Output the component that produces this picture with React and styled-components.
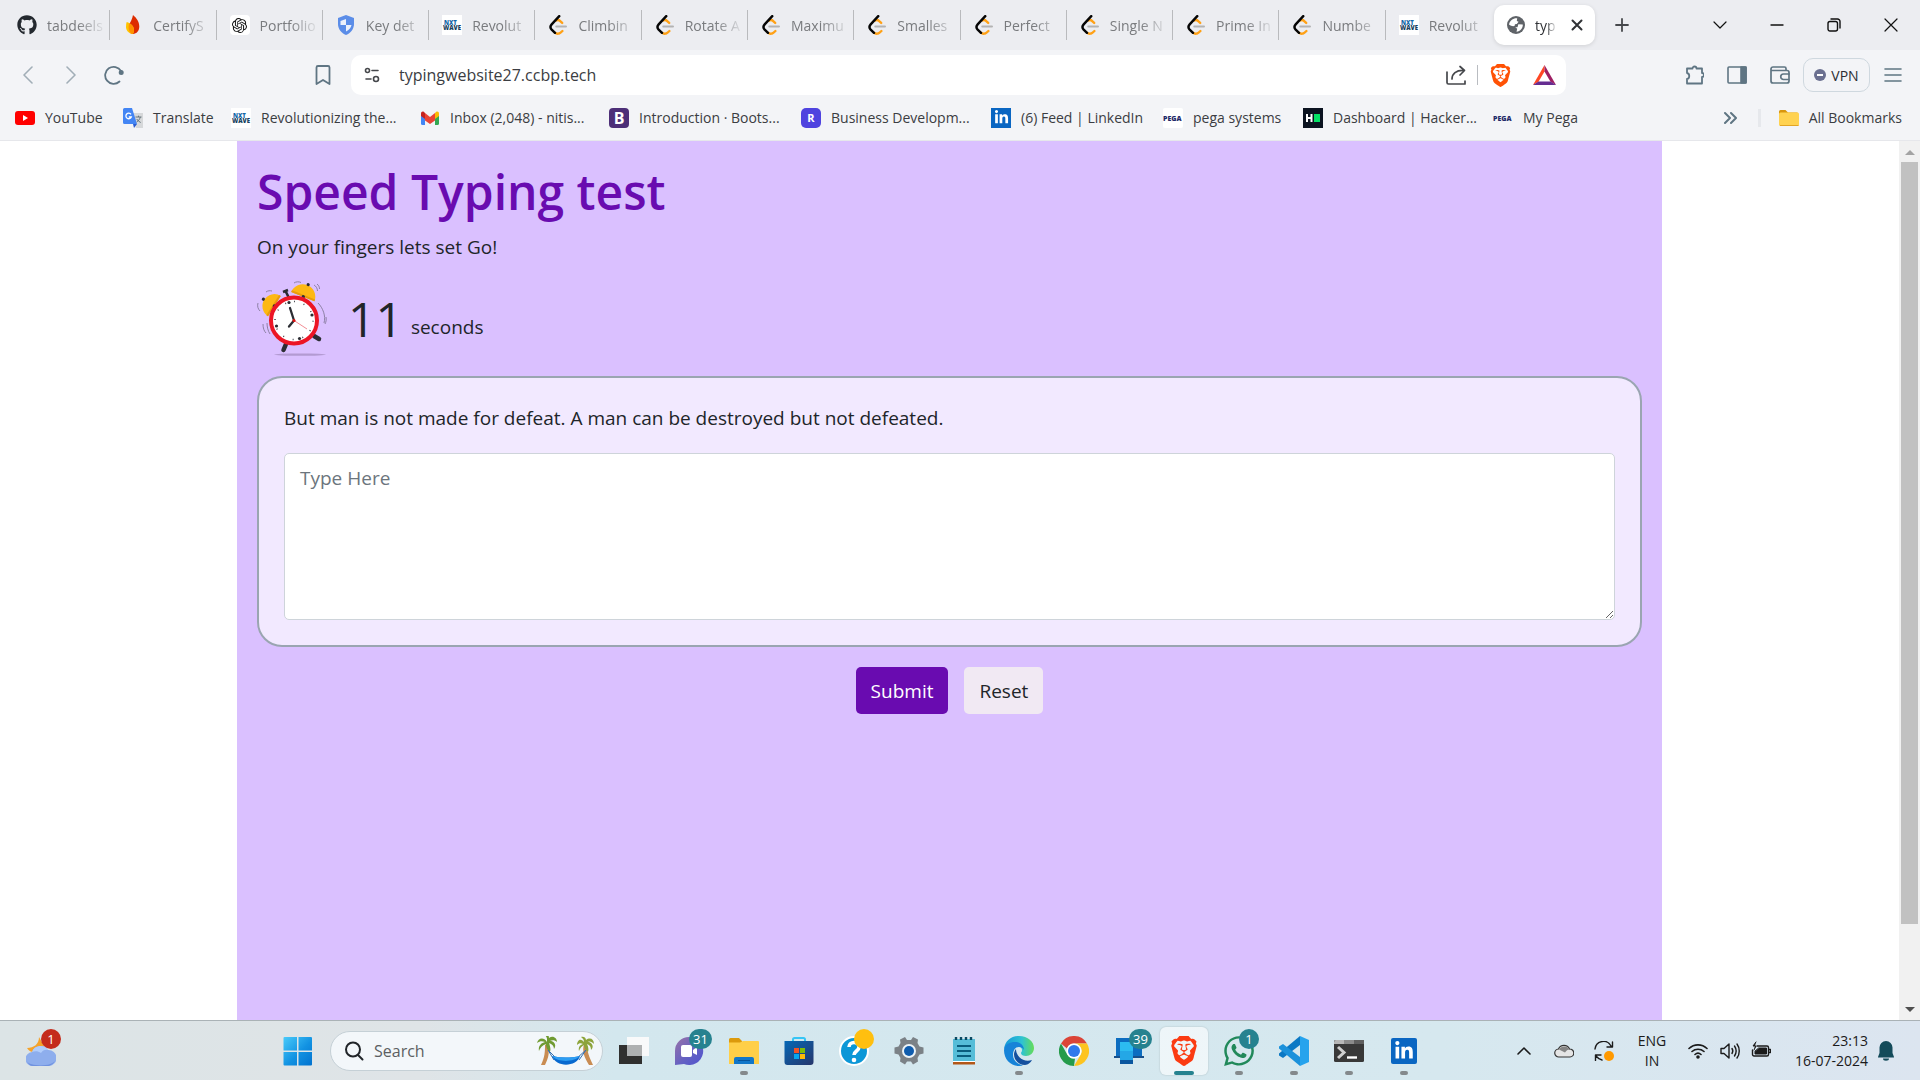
import React from "react";
import styled, { createGlobalStyle, css } from "styled-components";
import { FaGithub, FaWhatsapp, FaLinkedinIn } from "react-icons/fa";
import { SiOpenai, SiBrave } from "react-icons/si";

const fontStack = `"Open Sans", "Noto Sans", "Liberation Sans", sans-serif`;

const GlobalStyle = createGlobalStyle`
  *, *::before, *::after { box-sizing: border-box; }
  body { margin: 0; background: #fff; font-family: ${fontStack}; color: #212529; }
  button, input, textarea { font-family: inherit; }
  h1, p { margin: 0; }
`;

const Screen = styled.div`
  display: flex;
  flex-direction: column;
  min-height: 100vh;
`;

const plainButton = css`
  display: flex;
  align-items: center;
  justify-content: center;
  padding: 0;
  border: 0;
  background: none;
  color: inherit;
  cursor: pointer;
`;

/* ---------- tab strip ---------- */

const TabStrip = styled.header`
  display: flex;
  align-items: center;
  height: 50px;
  padding-left: 4px;
  background: #ecedf1;
`;

const TabList = styled.div`
  display: flex;
  flex: 0 1 1488px;
  min-width: 0;
`;

const Tab = styled.button`
  ${plainButton}
  justify-content: flex-start;
  flex: 1 1 0;
  min-width: 0;
  height: 30px;
  gap: 10px;
  padding: 0 2px 0 13px;
  border-right: 1px solid ${(p) => (p.$last ? "transparent" : "#b9babd")};
  color: #797b7e;
  font-size: 14px;
`;

const TabLabel = styled.span`
  flex: 1;
  min-width: 0;
  overflow: hidden;
  text-align: left;
  white-space: nowrap;
  mask-image: linear-gradient(to right, #000 50%, transparent 100%);
`;

const ActiveTab = styled.div`
  display: flex;
  align-items: center;
  flex: 0 0 101px;
  height: 40px;
  margin-left: 2px;
  padding: 0 8px 0 13px;
  gap: 10px;
  border-radius: 10px;
  background: #fff;
  box-shadow: 0 1px 4px rgba(0, 0, 0, 0.12);
  color: #303236;
  font-size: 14px;
`;

const SmallButton = styled.button`
  ${plainButton}
  flex: 0 0 20px;
  height: 20px;
`;

const NewTabButton = styled.button`
  ${plainButton}
  width: 54px;
  height: 40px;
  color: #46484c;
`;

const WindowControls = styled.div`
  display: flex;
  margin-left: auto;
  padding-right: 1px;
`;

const WindowButton = styled.button`
  ${plainButton}
  width: 57px;
  height: 50px;
  color: #111;
`;

/* ---------- toolbar ---------- */

const Toolbar = styled.nav`
  display: flex;
  align-items: center;
  height: 50px;
  background: #f3f4f7;
  color: #5f7583;
`;

const NavGroup = styled.div`
  display: flex;
  flex: 0 0 351px;
  gap: 1px;
  padding: 0 7px;
`;

const ToolButton = styled.button`
  ${plainButton}
  width: ${(p) => p.$width || 42}px;
  height: 40px;
  margin-left: ${(p) => (p.$push ? "auto" : 0)};
  opacity: ${(p) => (p.$faded ? 0.55 : 1)};
`;

const AddressBar = styled.label`
  display: flex;
  align-items: center;
  flex: 1;
  height: 40px;
  padding-right: 1px;
  border-radius: 10px;
  background: #fff;
  color: #45474b;
`;

const AddressInput = styled.input`
  flex: 1;
  min-width: 0;
  padding: 0 0 0 6px;
  border: 0;
  outline: 0;
  background: none;
  color: #3b3d42;
  font-size: 16px;
`;

const AddressDivider = styled.span`
  width: 1px;
  height: 20px;
  background: #b9bcc1;
`;

const ExtensionGroup = styled.div`
  display: flex;
  align-items: center;
  justify-content: flex-end;
  flex: 0 0 354px;
  gap: 3px;
  padding-right: 7px;
`;

const VpnButton = styled.button`
  ${plainButton}
  width: 67px;
  height: 34px;
  gap: 5px;
  border: 1px solid #cfd8df;
  border-radius: 10px;
  color: #2b2d33;
  font-size: 14px;
`;

const BookmarksBar = styled.nav`
  display: flex;
  align-items: center;
  height: 41px;
  padding: 0 18px 5px 15px;
  border-bottom: 1px solid #e6e7eb;
  background: #f3f4f7;
`;

const Bookmark = styled.a`
  display: flex;
  align-items: center;
  flex: 0 1 ${(p) => p.$width}px;
  gap: 10px;
  color: #3b3d42;
  font-size: 14px;
  text-decoration: none;
  white-space: nowrap;
`;

const BookmarksEnd = styled.div`
  display: flex;
  align-items: center;
  gap: 18px;
  margin-left: auto;
`;

const BookmarksDivider = styled.span`
  width: 3px;
  height: 18px;
  background: #e6e8ec;
`;

const BadgeIcon = styled.span`
  display: flex;
  flex: 0 0 20px;
  flex-direction: column;
  align-items: center;
  justify-content: center;
  height: 20px;
  border-radius: ${(p) => p.$radius || 0}px;
  background: ${(p) => p.$bg || "#fff"};
  color: ${(p) => p.$color || "#fff"};
`;

/* ---------- web page ---------- */

const Viewport = styled.main`
  display: flex;
  flex: 1;
  background: #fff;
`;

const PageArea = styled.div`
  display: flex;
  flex: 1;
  justify-content: center;
`;

const TypingPage = styled.section`
  width: 100%;
  max-width: 1425px;
  padding: 21px 20px 20px;
  background: #dac0ff;
`;

const Title = styled.h1`
  color: #690bb0;
  font-size: 48px;
  font-weight: 600;
  line-height: 60px;
`;

const Tagline = styled.p`
  margin: 10px 0 19px;
  font-size: 19px;
  line-height: 30px;
`;

const TimerRow = styled.div`
  display: flex;
  align-items: center;
  height: 75px;
  margin-bottom: 20px;
`;

const TimerText = styled.p`
  display: flex;
  align-items: flex-end;
  gap: 8px;
  margin-left: 19px;
  font-size: 19px;
  line-height: 30px;
`;

const TimerUnit = styled.span`
  padding-bottom: 7px;
`;

const TimerCount = styled.span`
  font-size: 48px;
  line-height: 60px;
`;

const QuoteCard = styled.div`
  padding: 25px;
  border: 2px solid #9aa5b1;
  border-radius: 25px;
  background: #f2e9ff;
`;

const Quote = styled.label`
  display: block;
  margin-bottom: 20px;
  font-size: 19px;
  line-height: 30px;
`;

const TypingBox = styled.textarea`
  display: block;
  width: 100%;
  height: 167px;
  padding: 9px 15px;
  border: 1px solid #ced4da;
  border-radius: 5px;
  background: #fff;
  font-size: 19px;
  line-height: 30px;
  outline: 0;
  &::placeholder { color: #6c757d; opacity: 1; }
`;

const Actions = styled.div`
  display: flex;
  justify-content: center;
  gap: 16px;
  margin-top: 20px;
`;

const ActionButton = styled.button`
  ${plainButton}
  height: 47px;
  padding: 0 15px;
  border-radius: 5px;
  background: ${(p) => (p.$primary ? "#690bb0" : "#f1e9f3")};
  color: ${(p) => (p.$primary ? "#fff" : "#212529")};
  font-size: 19px;
`;

const Scrollbar = styled.div`
  display: flex;
  flex-direction: column;
  flex: 0 0 21px;
  align-items: center;
  background: #f1f1f1;
`;

const ScrollEnd = styled.div`
  display: flex;
  align-items: center;
  justify-content: center;
  height: 21px;
`;

const ScrollTrack = styled.div`
  flex: 1;
  width: 17px;
`;

const ScrollThumb = styled.div`
  height: 91%;
  background: #c1c1c1;
`;

/* ---------- taskbar ---------- */

const Taskbar = styled.footer`
  display: flex;
  align-items: center;
  height: 60px;
  border-top: 1px solid #aab2b6;
  background: linear-gradient(90deg, #dce4e6 0%, #dfe4e7 22%, #d3e7ee 32%, #d6e8ef 75%, #dce5f0 100%);
`;

const WeatherArea = styled.div`
  display: flex;
  flex: 0 0 270px;
  padding-left: 17px;
`;

const AppButton = styled.button`
  ${plainButton}
  position: relative;
  flex: 0 0 ${(p) => p.$width || 48}px;
  height: 48px;
  border-radius: 6px;
  background: ${(p) => (p.$active ? "rgba(255,255,255,.6)" : "none")};
  box-shadow: ${(p) => (p.$active ? "0 0 2px rgba(0,0,0,.2)" : "none")};
`;

const CountBadge = styled.span`
  position: absolute;
  top: 2px;
  left: 50%;
  min-width: 20px;
  height: 20px;
  padding: 0 4px;
  border-radius: 10px;
  background: ${(p) => p.$color || "#26828f"};
  color: #fff;
  font-size: 13px;
  line-height: 20px;
`;

const RunningMark = styled.span`
  position: absolute;
  bottom: 0;
  left: 50%;
  width: ${(p) => (p.$active ? 20 : 8)}px;
  height: 4px;
  border-radius: 2px;
  background: ${(p) => (p.$active ? "#26828f" : "#84898c")};
  transform: translateX(-50%);
`;

const SearchBox = styled.label`
  display: flex;
  align-items: center;
  flex: 0 0 273px;
  min-width: 0;
  height: 40px;
  margin: 0 7px 0 5px;
  padding: 0 8px 0 13px;
  gap: 10px;
  border: 1px solid #c5d0d6;
  border-radius: 20px;
  background: #f3f7fa;
`;

const SearchInput = styled.input`
  flex: 1;
  width: 100%;
  min-width: 0;
  padding: 0;
  border: 0;
  outline: 0;
  background: none;
  font-size: 16px;
  &::placeholder { color: #5c5f62; opacity: 1; }
`;

const AppRow = styled.div`
  display: flex;
  gap: 7px;
`;

const Tray = styled.div`
  display: flex;
  align-items: center;
  margin-left: auto;
  padding-right: 16px;
  color: #1b1b1b;
`;

const TrayButton = styled.button`
  ${plainButton}
  flex: 0 0 ${(p) => p.$width}px;
  height: 48px;
`;

const TrayText = styled.button`
  ${plainButton}
  flex: 0 0 ${(p) => p.$width}px;
  flex-direction: column;
  align-items: ${(p) => p.$align || "center"};
  font-size: 14px;
  line-height: 20px;
  white-space: nowrap;
`;

/* ---------- drawings ---------- */

const Line = ({ size = 20, box = 20, width = 1.6, children, ...rest }) => (
  <svg width={size} height={size} viewBox={`0 0 ${box} ${box}`} fill="none" stroke="currentColor"
    strokeWidth={width} strokeLinecap="round" strokeLinejoin="round" aria-hidden="true" {...rest}>
    {children}
  </svg>
);

const ArtSvg = styled.svg`
  flex-shrink: 0;
`;

const Art = ({ w = 20, h = w, box, children }) => (
  <ArtSvg width={w} height={h} viewBox={box || `0 0 ${w} ${h}`} fill="none" aria-hidden="true">
    {children}
  </ArtSvg>
);

const LeetCode = () => (
  <Art box="0 0 24 24">
    <path d="M13.3 22.2c-1.7.6-3.6.3-5-1M13.3 22.2c1-.2 1.8-.8 4-3M10 6.5c2-1 3.600-.3 4.700.8l2.300 2.200" stroke="#ffa116" strokeWidth="2.8" strokeLinecap="round" />
    <path d="M10 13.8h11.5" stroke="#b3b3b3" strokeWidth="2.6" strokeLinecap="round" />
    <path d="M13.5 1.4 4.4 11.2c-1.7 1.9-1.7 4.5 0 6.3l4 3.9" stroke="#050505" strokeWidth="2.9" strokeLinecap="round" />
  </Art>
);

const Flame = () => (
  <Art>
    <path d="M10 0c3.5 3 6.3 6.5 6.3 11.6 0 4.2-2.6 7.4-6.3 7.4-4 0-5-5-4-9C7 7.500 9.300 4.500 10 0Z" fill="#dd2c00" />
    <path d="M3.700 7c4 1 7.300 4.300 7.300 8 0 2.200-.7 3.800-1.500 4C6 18.700 3 15.500 3 12c0-2 .2-3.600.7-5Z" fill="#ffc400" />
    <path d="M6.200 8.200c2.800 1.400 4.800 4 4.800 6.800 0 2.200-.7 3.800-1.500 4-4-2-4.600-6-3.300-10.800Z" fill="#ff9100" />
  </Art>
);

const Shield = () => (
  <Art>
    <path d="M10 0 2 3v6c0 5 3.400 9 8 11 4.600-2 8-6 8-11V3Z" fill="#5b8de8" />
    <path d="M10 4v6H4.500V6ZM10 10h5.500c-.5 3-2.500 5-5.500 6.500Z" fill="#ecf1fb" />
  </Art>
);

const NxtWave = () => (
  <Art>
    <path d="M0 0h20v20H0z" fill="#fff" />
    <text x="2" y="9.500" fontSize="6" fontWeight="800" fontFamily="Open Sans" fill="#1668a8">NXT</text>
    <text x="1" y="15" fontSize="6" fontWeight="800" fontFamily="Open Sans" fill="#173f60">WAVE</text>
  </Art>
);

const ChatGpt = () => (
  <BadgeIcon $radius={4} $color="#111"><SiOpenai size={15} /></BadgeIcon>
);

const Pega = ({ bg = "#fff" }) => (
  <Art>
    <rect width="20" height="20" rx="2" fill={bg} />
    <text x="0" y="13" fontSize="7" fontWeight="800" fontFamily="Open Sans" fill="#1f2a68">PEGA</text>
  </Art>
);

const Globe = () => (
  <Art w={18}>
    <circle cx="9" cy="9" r="9" fill="#5f6368" />
    <path d="M10.200 2.200C6.500 1.800 2.600 4.500 2 8.500c1.800 1.300 3.600 2 5.500 1.500l.5-1.700 1.800-.3 1.800-2.300-1.800-.7ZM11.300 8.300l4.500.2c.3 3.500-2.500 7-6.300 7.300l.7-3-2-1.500h2.300Z" fill="#fff" />
  </Art>
);

const YouTube = () => (
  <Art>
    <rect y="3" width="20" height="14" rx="3" fill="#f00" />
    <path d="m8 7 5 3-5 3Z" fill="#fff" />
  </Art>
);

const Translate = () => (
  <Art>
    <path d="M8 5h12v15h-7Z" fill="#d6d8da" />
    <path d="M0 1.500A1.500 1.500 0 0 1 1.500 0H9l5 16H1.500A1.500 1.500 0 0 1 0 14.500Z" fill="#4385f4" />
    <path d="m10 16 4 0-3 4Z" fill="#2a5bd0" />
    <path d="M8 6.300A2.800 2.800 0 1 0 8.300 9H5.800" stroke="#fff" strokeWidth="1.300" />
    <path d="M12.500 9h6M15.500 7.700V9M17.300 9c-.6 2.300-2 4-3.600 5M13.700 11c1 1.600 2.400 2.800 4 3.500" stroke="#66747c" />
  </Art>
);

const Gmail = () => (
  <Art>
    <path d="M1 6v9.500A1.500 1.500 0 0 0 2.500 17H5V8Z" fill="#4285f4" />
    <path d="M19 6v9.500a1.500 1.500 0 0 1-1.500 1.500H15V8Z" fill="#34a853" />
    <path d="M5 8v4.500l5 3.500 5-3.500V5l-5 4-5-4Z" fill="#ea4335" />
    <path d="M1 5.500V8l4 3V5L4 4C2.500 3 1 4 1 5.500Z" fill="#c5221f" />
    <path d="M19 5.500V8l-4 3V5l1-1c1.500-1 3 0 3 1.500Z" fill="#fbbc04" />
  </Art>
);

const LetterMark = styled.b`
  font-size: ${(p) => p.$size}px;
  line-height: 20px;
`;

const BootstrapMark = () => (
  <BadgeIcon $radius={4} $bg="#4d2f78"><LetterMark $size={16}>B</LetterMark></BadgeIcon>
);

const RMark = () => (
  <BadgeIcon $radius={5} $bg="#4f43df"><LetterMark $size={11}>R</LetterMark></BadgeIcon>
);

const LinkedInMark = () => (
  <BadgeIcon $bg="#0a66c2"><FaLinkedinIn size={15} /></BadgeIcon>
);

const HackerRank = () => (
  <Art>
    <path d="M0 0h20v20H0z" fill="#0b1320" />
    <path d="M4 6v8M8.500 6v8M4 10h4.500" stroke="#fff" strokeWidth="2" />
    <path d="M11 6h6v8h-6z" fill="#05e266" />
  </Art>
);

const Folder = () => (
  <Art>
    <path d="M0 3.500A1.500 1.500 0 0 1 1.500 2h5L9 4.500h9.500V8H0Z" fill="#d9960d" />
    <rect y="4.500" width="20" height="13.500" rx="1.500" fill="#ffd251" />
    <path d="M1 17.500h18.500" stroke="#e2a526" />
  </Art>
);

const BatTriangle = () => (
  <Art w={23} h={20}>
    <path d="M11.500 0 0 20l5.500-3.300 6-10.200Z" fill="#ff4724" />
    <path d="M11.500 0 23 20l-5.500-3.300-6-10.200Z" fill="#9e1f63" />
    <path d="M0 20h23l-5.500-3.500h-12Z" fill="#662d91" />
  </Art>
);

const AlarmClock = () => (
  <Art w={72} h={75}>
    <ellipse cx="43" cy="73.600" rx="26" ry="1.200" fill="#b39ad2" />
    <path d="m29 63-2.500 6M57 55l5 3" stroke="#2b2d33" strokeWidth="4.500" strokeLinecap="round" />
    <path d="m26 11 5-2M28.500 10l3 6" stroke="#2b2d33" strokeWidth="2.600" />
    <g transform="rotate(22 47 14)">
      <path d="M34 16a12.500 12.500 0 0 1 25 0Z" fill="#fdb813" />
      <path d="M34 16h25v-2H34Z" fill="#e99c0c" />
      <circle cx="47" cy="2.800" r="1.600" fill="#2b2d33" /><circle cx="47" cy="16" r="1.700" fill="#2b2d33" />
    </g>
    <g transform="rotate(-58 14 23)">
      <path d="M2 27a12 12 0 0 1 24 0Z" fill="#fdb813" />
      <path d="M2 27h24v-2H2Z" fill="#e99c0c" />
      <circle cx="14" cy="14" r="1.600" fill="#2b2d33" /><circle cx="14" cy="27" r="1.700" fill="#2b2d33" />
    </g>
    <circle cx="37" cy="39.500" r="23" fill="#fff" stroke="#ec1525" strokeWidth="4" />
    <path d="M37 20.500a19 19 0 0 1 0 38 19 19 0 0 1 0-38" stroke="#43464d" strokeWidth="1.500" strokeDasharray="1 8.950" />
    <g fill="#2b2d33"><circle cx="32" cy="21.500" r="1.600" /><circle cx="55" cy="34" r="1.600" /><circle cx="42.500" cy="57.500" r="1.600" /><circle cx="19.500" cy="45" r="1.600" /></g>
    <path d="M37 39.500 33 27M37 39.500l-5 6" stroke="#2b2d33" strokeWidth="2.300" strokeLinecap="round" />
    <path d="m37 39.500 13 8.500" stroke="#ee7078" strokeWidth=".8" />
    <circle cx="37" cy="39.500" r="1.500" fill="#d11" />
    <path d="M61 22c5 5 8 13 6 20M65 21M69 36c.5 3 0 5-1 7M6 43c0 4 1 7 3 9M10 42c0 4 1 8 3 11M1 22c-1 3 0 6 2 8M9 11c2-1.500 4-1.500 6-1M37 2c2-1.500 5-1.500 7-.5M57 4c2 1 3.500 3.500 3.500 6M60 3c2 1.500 2.500 3.500 2.500 5" stroke="#85799b" strokeWidth=".9" />
  </Art>
);

const Weather = () => (
  <Art w={30}>
    <path d="M13 1c0 7-5 11-12 11 3 6 14 6 17-2Z" fill="#f5a32b" />
    <path d="M7 30a7 7 0 0 1-1-14 9 9 0 0 1 16-2 8 8 0 0 1 1 16Z" fill="#8eaeed" />
    <path d="M6 16a9 9 0 0 1 16-2c-3-.5-5 0-7 3-3-2-6-2-9-1Z" fill="#b1cdfb" />
    <path d="M1 25c2 6 27 6 28-1-1 4-5 6-8 6H7c-3 0-5-2-6-5Z" fill="#7092df" />
  </Art>
);

const WindowsLogo = () => (
  <Art w={30}>
    <defs><linearGradient id="win" x1="0" y1="0" x2="30" y2="30" gradientUnits="userSpaceOnUse"><stop stopColor="#4ccdfb" /><stop offset=".55" stopColor="#1292e2" /><stop offset="1" stopColor="#0070ce" /></linearGradient></defs>
    <path d="M1.500 1H14v13.500H.5V2a1 1 0 0 1 1-1ZM15.500 1H28a1 1 0 0 1 1 1v12.500H15.500ZM.5 16H14v13.500H1.500a1 1 0 0 1-1-1ZM15.500 16H29v12.500a1 1 0 0 1-1 1H15.500Z" fill="url(#win)" />
  </Art>
);

const Hammock = () => (
  <Art w={57} h={30}>
    <path d="M10 8c3 7 2 13-2 21H4c4-8 4-14 4-20ZM47 8c-2 7 0 13 5 21h4c-4-8-6-14-6-20Z" fill="#c98c52" />
    <path d="M10 6C6 0 1 3 0 7c3-2 5-2 8-1-4 1-7 4-6 9 2-5 5-6 7-7 0 3 1 6 4 8 1-3 0-6-1-9 3 1 5 3 5 6 3-4 0-8-4-8 2-1 5-1 7 1 0-4-4-7-8-4 0-3-2-4-5-4 1 1 3 3 3 5Z" fill="#709b31" />
    <path d="M47 6c-4-5-7-1-7 3 2-2 4-2 6-1-3 1-5 3-4 7 1-3 3-5 5-6 0 3 2 5 4 7 1-3 0-6-1-8 3 1 4 3 4 6 4-4 0-8-3-8 2-1 4 0 6 2 0-5-4-7-8-4 0-2-2-4-5-3 1 1 3 2 3 5Z" fill="#8da43b" />
    <path d="m11 14 8 8m-8-8 6 10m32-10-7 10m7-10-9 8" stroke="#356fae" />
    <path d="M15 20c9 2 18 2 28 0-3 11-24 12-28 0Z" fill="#0869cf" />
    <path d="M15 20c9 2 18 2 28 0-5 6-22 7-28 0Z" fill="#2c9df2" />
  </Art>
);

const TaskView = () => (
  <Art w={30}>
    <path d="M0 9h23v19H0z" fill="#30302f" />
    <path d="M8 1h22v19H8z" fill="#f8f9fa" />
    <path d="M8 9h15v11H8z" fill="#aeb0b1" />
  </Art>
);

const ChatApp = () => (
  <Art w={30}>
    <defs><linearGradient id="chat" x2="1" y2="1"><stop stopColor="#9a73a8" /><stop offset=".6" stopColor="#6260c4" /><stop offset="1" stopColor="#4f52ce" /></linearGradient></defs>
    <path d="M15 1a14 14 0 1 1-5 27L1 29V15A14 14 0 0 1 15 1Z" fill="url(#chat)" />
    <rect x="7" y="9" width="11" height="12" rx="2" fill="#fff" /><path d="m19 14 4-3v8l-4-2Z" fill="#fff" />
  </Art>
);

const Explorer = () => (
  <Art w={30}>
    <path d="M0 3.500A1.500 1.500 0 0 1 1.500 2H10l3 3v4H0Z" fill="#dc9a0c" />
    <path d="M0 6.500h11l3-1.500h15a1 1 0 0 1 1 1v22H0Z" fill="#ffcf48" />
    <path d="M5 28v-5a2 2 0 0 1 2-2h16a2 2 0 0 1 2 2v5Z" fill="#1277c9" /><path d="M9 24.500h12" stroke="#07549b" />
  </Art>
);

const Store = () => (
  <Art w={30}>
    <path d="M9 6V3.500A1.500 1.500 0 0 1 10.500 2h9A1.500 1.500 0 0 1 21 3.500V6" stroke="#35c5f5" strokeWidth="2" />
    <defs><linearGradient id="store" x2="1" y2="1"><stop stopColor="#0668b6" /><stop offset="1" stopColor="#27366b" /></linearGradient></defs>
    <path d="M.5 5h29v21a3 3 0 0 1-3 3h-23a3 3 0 0 1-3-3Z" fill="url(#store)" />
    <path d="M10 12h5v5h-5z" fill="#f35325" /><path d="M16 12h5v5h-5z" fill="#81bc06" /><path d="M10 18h5v5h-5z" fill="#05a6f0" /><path d="M16 18h5v5h-5z" fill="#ffba08" />
  </Art>
);

const Help = () => (
  <Art w={30}>
    <circle cx="15" cy="15" r="14" fill="#0c97d7" stroke="#fff" strokeWidth="2" />
    <path d="M10 11c0-6 10-6 10 0 0 4-5 4-5 8" stroke="#fff" strokeWidth="3.600" /><circle cx="15" cy="24" r="2.300" fill="#fff" />
  </Art>
);

const Gear = () => (
  <Art w={30}>
    <path d="m11 1 2 3h4l2-3 5 2.500-.5 3.500 2 3.500 4 1v6l-4 1-2 3.500.5 3.500-5 3-2-3h-4l-2 3-5-3 .5-3.500-2-3.500-4-1v-6l4-1L6.500 7 6 3.500Z" fill="#7b8186" />
    <circle cx="15" cy="15" r="7" fill="#ecf3f7" /><circle cx="15" cy="15" r="5" fill="#0f5cad" />
  </Art>
);

const Notepad = () => (
  <Art w={30}>
    <path d="M4 3h22v23H4z" fill="#56bdd8" /><path d="M4 26h22v2.500H4z" fill="#b25718" /><path d="M4 25.500h22" stroke="#fff" />
    <path d="M7 1v3m5-3v3m5-3v3m5-3v3" stroke="#0b4a63" strokeWidth="2.400" /><path d="M8 10h14M8 15h14M8 20h14" stroke="#0a5d7d" strokeWidth="1.800" />
  </Art>
);

const Edge = () => (
  <Art w={30}>
    <defs><linearGradient id="edge" x2="1"><stop stopColor="#1397db" /><stop offset=".6" stopColor="#2fc3d2" /><stop offset="1" stopColor="#66dd56" /></linearGradient></defs>
    <path d="M0 13C1 5 7 0 15 0c9 0 15 6 15 12 0 5-4 8-8 8-3 0-5-1-5-3 0-1 1-1 1-3 0-2-2-4-5-4-6 0-11 2-13 3Z" fill="url(#edge)" />
    <path d="M0 14c1-6 6-8 11-8 6 0 9 4 9 8-1-2-3-3-5-3-4 0-6 4-6 8 0 5 4 9 10 10.500C9 32 0 25 0 14Z" fill="#1683d8" />
    <path d="M12 13c-5 6 0 16 9 16 3 0 6-3 7-5-8 3-16-3-16-11Z" fill="#15509e" />
  </Art>
);

const Chrome = () => (
  <Art w={30}>
    <path d="M2 7.500A15 15 0 0 1 28 7.500H15a7.500 7.500 0 0 0-7 5Z" fill="#db4437" />
    <path d="M2 7.500 8.500 19a7.500 7.500 0 0 0 7.500 3.500L15 30A15 15 0 0 1 2 7.500Z" fill="#259b4b" />
    <path d="M28 7.500A15 15 0 0 1 15 30l6.500-11A7.500 7.500 0 0 0 15 7.500Z" fill="#fdc420" />
    <circle cx="15" cy="15" r="7.500" fill="#fff" /><circle cx="15" cy="15" r="6" fill="#2f78ec" />
  </Art>
);

const PhoneLink = () => (
  <Art w={30}>
    <path d="M2 2h26v18H2z" fill="#0c6dc0" /><path d="M0 20h30v2H0z" fill="#174f8b" />
    <path d="M6 6h13v22H6z" fill="#24a7e6" /><path d="M6 24h13v4H6z" fill="#0b579f" /><path d="M6 6h13v9H6z" fill="#2cbcf0" />
  </Art>
);

const VsCode = () => (
  <Art w={30}>
    <path d="M21 0 30 4v22l-9 4Z" fill="#26a3ed" />
    <path d="M21 0v9L4 22 0 19.500v-2L21 0Z" fill="#0b78c4" />
    <path d="M21 30v-9L4 8 0 10.500v2L21 30Z" fill="#1b91db" />
  </Art>
);

const Terminal = () => (
  <Art w={30}>
    <rect y="4" width="30" height="22" rx="1.500" fill="#383838" /><path d="M1.500 4H10v4H0V5.500Z" fill="#b7b7b7" /><path d="M10 4h10v4H10z" fill="#8b8b8b" /><path d="M20 4h10v4H20z" fill="#5f5f5f" />
    <path d="m4 11 6 5.500L4 22" stroke="#cfcfcf" strokeWidth="3" /><path d="M13 21.500h10" stroke="#fff" strokeWidth="2.400" />
  </Art>
);

const LinkedInApp = styled.span`
  display: flex;
  align-items: center;
  justify-content: center;
  width: 26px;
  height: 26px;
  border-radius: 2px;
  background: #0a66c2;
  color: #fff;
`;

const Bell = () => (
  <Art w={18} h={20}>
    <path d="M9 0a6.500 6.500 0 0 1 6.500 6.500V12l1.500 4v.500H1V16l1.500-4V6.500A6.500 6.500 0 0 1 9 0ZM6 17.500h6a3 2.200 0 0 1-6 0Z" fill="#144b5a" />
  </Art>
);

/* ---------- data ---------- */

const tabs = [
  ["tabdeels", <FaGithub size={20} color="#24292f" />],
  ["CertifyS", <Flame />],
  ["Portfolio", <ChatGpt />],
  ["Key det", <Shield />],
  ["Revolut", <NxtWave />],
  ["Climbin", <LeetCode />],
  ["Rotate A", <LeetCode />],
  ["Maximu", <LeetCode />],
  ["Smalles", <LeetCode />],
  ["Perfect", <LeetCode />],
  ["Single N", <LeetCode />],
  ["Prime In", <LeetCode />],
  ["Numbe", <LeetCode />],
  ["Revolut", <NxtWave />],
];

const bookmarks = [
  ["YouTube", 108, <YouTube />],
  ["Translate", 108, <Translate />],
  ["Revolutionizing the...", 189, <NxtWave />],
  ["Inbox (2,048) - nitis...", 189, <Gmail />],
  ["Introduction · Boots...", 192, <BootstrapMark />],
  ["Business Developm...", 190, <RMark />],
  ["(6) Feed | LinkedIn", 172, <LinkedInMark />],
  ["pega systems", 140, <Pega />],
  ["Dashboard | Hacker...", 190, <HackerRank />],
  ["My Pega", 100, <Pega bg="none" />],
];

const apps = [
  { name: "Task view", icon: <TaskView /> },
  { name: "Chat", icon: <ChatApp />, badge: "31" },
  { name: "File Explorer", icon: <Explorer />, running: true },
  { name: "Microsoft Store", icon: <Store /> },
  { name: "Get Help", icon: <Help />, badge: "", badgeColor: "#ffbf0f" },
  { name: "Settings", icon: <Gear /> },
  { name: "Notepad", icon: <Notepad /> },
  { name: "Edge", icon: <Edge />, running: true },
  { name: "Chrome", icon: <Chrome /> },
  { name: "Phone Link", icon: <PhoneLink />, badge: "39" },
  { name: "Brave", icon: <SiBrave size={30} color="#fb3b12" />, running: true, active: true },
  { name: "WhatsApp", icon: <FaWhatsapp size={34} color="#21895a" />, badge: "1", running: true },
  { name: "Visual Studio Code", icon: <VsCode />, running: true },
  { name: "Terminal", icon: <Terminal />, running: true },
  { name: "LinkedIn", icon: <LinkedInApp><FaLinkedinIn size={20} /></LinkedInApp>, running: true },
];

export default function App() {
  return (
    <Screen>
      <GlobalStyle />
      <TabStrip>
        <TabList>
          {tabs.map(([label, icon], i) => (
            <Tab key={i} $last={i === tabs.length - 1}>
              {icon}
              <TabLabel>{label}</TabLabel>
            </Tab>
          ))}
        </TabList>
        <ActiveTab>
          <Globe />
          <TabLabel>typ</TabLabel>
          <SmallButton aria-label="Close tab">
            <Line size={12} box={12} width={2}><path d="m1.500 1.500 9 9m0-9-9 9" /></Line>
          </SmallButton>
        </ActiveTab>
        <NewTabButton aria-label="New tab">
          <Line size={14} box={14} width={1.8}><path d="M7 1v12M1 7h12" /></Line>
        </NewTabButton>
        <WindowControls>
          <WindowButton aria-label="Search tabs"><Line size={14} box={14} width={1.2}><path d="m1 4 6 6 6-6" /></Line></WindowButton>
          <WindowButton aria-label="Minimize"><Line size={14} box={14} width={1.4}><path d="M1 7h12" /></Line></WindowButton>
          <WindowButton aria-label="Restore"><Line size={14} box={14} width={1.4}><rect x="1" y="3.500" width="9.500" height="9.500" rx="2" /><path d="M4 1h6.500A2.500 2.500 0 0 1 13 3.500V10" /></Line></WindowButton>
          <WindowButton aria-label="Close window"><Line size={14} box={14} width={1.2}><path d="m1 1 12 12M13 1 1 13" /></Line></WindowButton>
        </WindowControls>
      </TabStrip>

      <Toolbar>
        <NavGroup>
          <ToolButton aria-label="Back" $faded><Line><path d="M14 2 6 10l8 8" /></Line></ToolButton>
          <ToolButton aria-label="Forward" $faded><Line><path d="m6 2 8 8-8 8" /></Line></ToolButton>
          <ToolButton aria-label="Reload"><Line width={1.8}><path d="M15.500 16.500A8.500 8.500 0 1 1 17 6" /><circle cx="17.200" cy="7.500" r="1.600" fill="currentColor" /></Line></ToolButton>
          <ToolButton aria-label="Bookmark this page" $push><Line width={1.8}><path d="M3.500 2.500a1.500 1.500 0 0 1 1.500-1.500h10a1.500 1.500 0 0 1 1.500 1.500V19L10 15l-6.500 4Z" /></Line></ToolButton>
        </NavGroup>
        <AddressBar>
          <ToolButton as="span"><Line size={16} box={16}><circle cx="3.500" cy="3.500" r="2" /><path d="M8 3.500h6M2 12h5" /><circle cx="12" cy="12" r="2.500" /></Line></ToolButton>
          <AddressInput aria-label="Address" defaultValue="typingwebsite27.ccbp.tech" />
          <ToolButton aria-label="Share"><Line width={1.7}><path d="M1 7v10.500A1.500 1.500 0 0 0 2.500 19H19v-3M6 14c0-5 4-9 12-8.500M14 1.500l4.500 4L14 10" /></Line></ToolButton>
          <AddressDivider />
          <ToolButton aria-label="Brave Shields" $width={45}><SiBrave size={23} color="#ff5205" /></ToolButton>
          <ToolButton aria-label="Brave Rewards"><BatTriangle /></ToolButton>
        </AddressBar>
        <ExtensionGroup>
          <ToolButton aria-label="Extensions" $width={40}><Line width={1.8}><path d="M3 3.500h5.500a2 2 0 0 1 4 0H18V8a2 2 0 0 1 0 4v6.500H3V14c3-.5 3-5.500 0-6Z" /></Line></ToolButton>
          <ToolButton aria-label="Sidebar" $width={40}><Line width={1.6}><rect x="1" y="2" width="18" height="16" rx="1" /><path d="M14 2h5v16h-5Z" fill="currentColor" /></Line></ToolButton>
          <ToolButton aria-label="Wallet" $width={40}><Line width={1.7}><path d="M16 5V3.500A1.500 1.500 0 0 0 14.500 2H3a2 2 0 0 0-2 2v12a2 2 0 0 0 2 2h14a2 2 0 0 0 2-2v-1M1 5.500h16a2 2 0 0 1 2 2V9" /><path d="M19 9v5.500h-5.500a2.700 2.700 0 0 1 0-5.500Z" /></Line></ToolButton>
          <VpnButton>
            <Art w={12}><circle cx="6" cy="6" r="6" fill="#6b7090" /><path d="M3 6h6" stroke="#fff" strokeWidth="2" /></Art>
            VPN
          </VpnButton>
          <ToolButton aria-label="Menu" $width={40}><Line size={18} box={18}><path d="M1 3h16M1 9h16M1 15h16" /></Line></ToolButton>
        </ExtensionGroup>
      </Toolbar>

      <BookmarksBar>
        {bookmarks.map(([label, width, icon]) => (
          <Bookmark href="#" key={label} $width={width}>{icon}{label}</Bookmark>
        ))}
        <BookmarksEnd>
          <SmallButton aria-label="More bookmarks"><Line size={14} box={14} width={2} color="#5f7583"><path d="m2 2 5 5-5 5M8 2l5 5-5 5" /></Line></SmallButton>
          <BookmarksDivider />
          <Bookmark href="#" $width={125}><Folder />All Bookmarks</Bookmark>
        </BookmarksEnd>
      </BookmarksBar>

      <Viewport>
        <PageArea>
          <TypingPage>
            <Title>Speed Typing test</Title>
            <Tagline>On your fingers lets set Go!</Tagline>
            <TimerRow>
              <AlarmClock />
              <TimerText><TimerCount>11</TimerCount><TimerUnit>seconds</TimerUnit></TimerText>
            </TimerRow>
            <QuoteCard>
              <Quote htmlFor="typing-box">But man is not made for defeat. A man can be destroyed but not defeated.</Quote>
              <TypingBox id="typing-box" placeholder="Type Here" />
            </QuoteCard>
            <Actions>
              <ActionButton $primary>Submit</ActionButton>
              <ActionButton>Reset</ActionButton>
            </Actions>
          </TypingPage>
        </PageArea>
        <Scrollbar aria-hidden="true">
          <ScrollEnd><Art w={10} h={6}><path d="m0 6 5-5 5 5Z" fill="#a3a3a3" /></Art></ScrollEnd>
          <ScrollTrack><ScrollThumb /></ScrollTrack>
          <ScrollEnd><Art w={10} h={6}><path d="m0 0 5 5 5-5Z" fill="#505050" /></Art></ScrollEnd>
        </Scrollbar>
      </Viewport>

      <Taskbar>
        <WeatherArea>
          <AppButton aria-label="Weather"><Weather /><CountBadge $color="#c42b1c">1</CountBadge></AppButton>
        </WeatherArea>
        <AppButton aria-label="Start" $width={55}><WindowsLogo /></AppButton>
        <SearchBox>
          <Line size={20} width={2}><circle cx="9" cy="8.500" r="7" /><path d="m14 14 4.500 4.500" /></Line>
          <SearchInput placeholder="Search" aria-label="Search" />
          <Hammock />
        </SearchBox>
        <AppRow>
          {apps.map((app) => (
            <AppButton key={app.name} aria-label={app.name} $active={app.active}>
              {app.icon}
              {app.badge !== undefined && <CountBadge $color={app.badgeColor}>{app.badge}</CountBadge>}
              {app.running && <RunningMark $active={app.active} />}
            </AppButton>
          ))}
        </AppRow>
        <Tray>
          <TrayButton aria-label="Show hidden icons" $width={40}><Line size={14} box={14}><path d="m1 10 6-6 6 6" /></Line></TrayButton>
          <TrayButton aria-label="OneDrive" $width={40}>
            <Art w={20}><path d="M5 16a4 4 0 0 1-.5-8A6 6 0 0 1 15.500 8 4 4 0 0 1 16 16Z" fill="#e5e5e5" stroke="#333" strokeWidth="1.200" /><path d="M5 8.500a6 6 0 0 1 10.500 0c-2 0-3 1-4.500 3Z" fill="#858585" /></Art>
          </TrayButton>
          <TrayButton aria-label="Update" $width={40}>
            <Line width={1.4}><path d="M1 8a8.500 8.500 0 0 1 16-3l1 1M18.500 1v5H13M8 19c-2.500-.5-4-1.500-6-4M1.500 19.500V14H7" /><circle cx="15" cy="15" r="5" fill="#f90" stroke="none" /></Line>
          </TrayButton>
          <TrayText $width={56}><span>ENG</span><span>IN</span></TrayText>
          <TrayButton aria-label="Network" $width={36}><Line><path d="M1 7.500a13 13 0 0 1 18 0M4 10.500a9 9 0 0 1 12 0M7 13.500a4.500 4.500 0 0 1 6 0" /><circle cx="10" cy="16" r="1" fill="currentColor" /></Line></TrayButton>
          <TrayButton aria-label="Volume" $width={28}><Line width={1.4}><path d="M1 7.500h3L9 3v14l-5-4.500H1ZM12 7.500c1 1.500 1 3.500 0 5M14.500 5c2 3 2 7 0 10M17 3c3 4 3 10 0 14" /></Line></TrayButton>
          <TrayButton aria-label="Battery" $width={34}><Line width={1.4}><path d="M6 5h10a1.500 1.500 0 0 1 1.500 1.500v7A1.500 1.500 0 0 1 16 15H3a1.500 1.500 0 0 1-1.500-1.500V9M18 8.500h1.500v3H18" /><path d="M8 7h7.500v6H4v-2.500ZM5 1 2 5h3L3 9" fill="currentColor" strokeWidth="1" /></Line></TrayButton>
          <TrayText $width={90} $align="flex-end"><span>23:13</span><span>16-07-2024</span></TrayText>
          <TrayButton aria-label="Notifications" $width={36}><Bell /></TrayButton>
        </Tray>
      </Taskbar>
    </Screen>
  );
}
